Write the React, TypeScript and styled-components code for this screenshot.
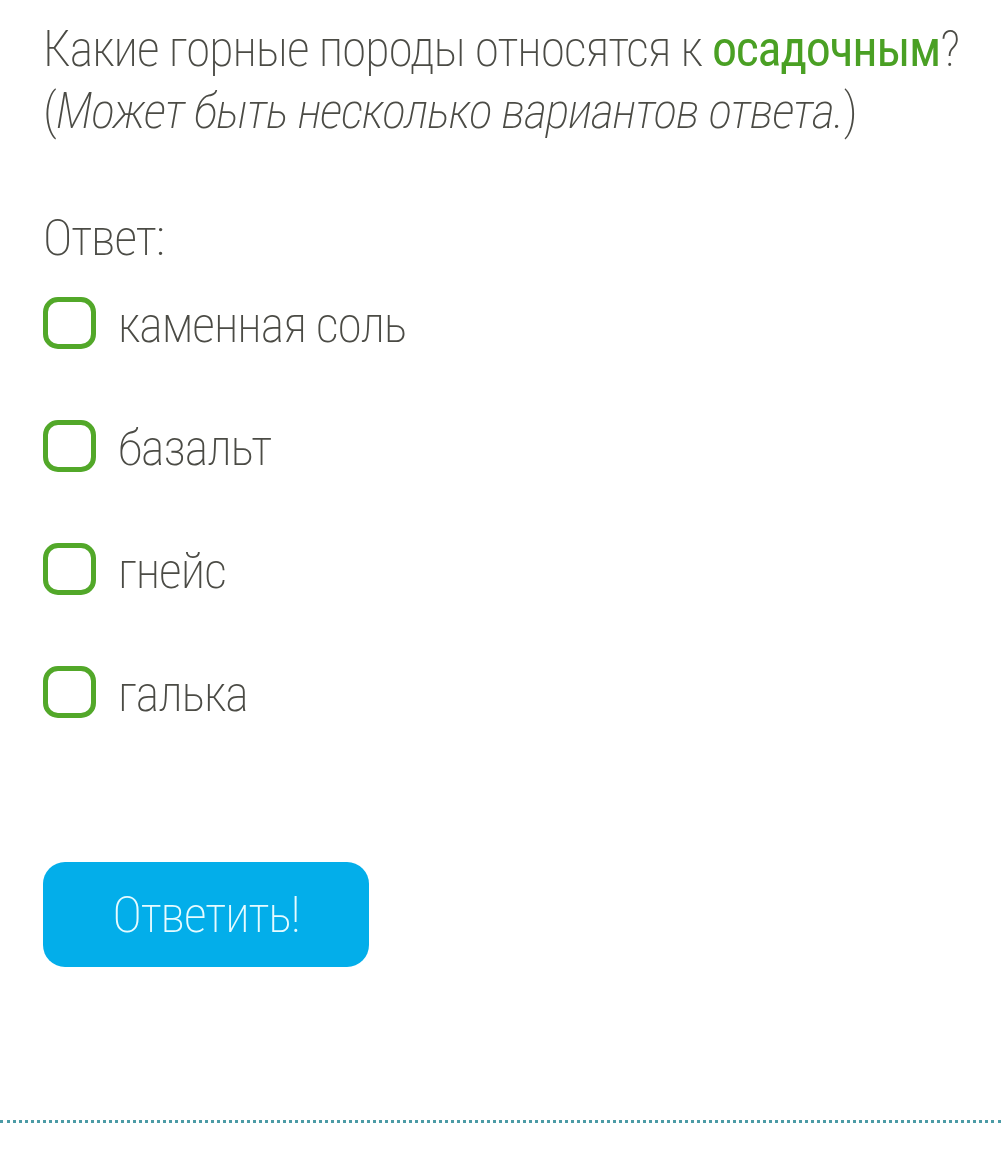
import React from "react";
import styled, { createGlobalStyle } from "styled-components";

const Global = createGlobalStyle`
  html, body { margin: 0; padding: 0; background: #ffffff; }
  body {
    font-family: "Roboto Condensed", "Roboto", "Liberation Sans", sans-serif;
    font-stretch: 75%;
    font-weight: 250;
    letter-spacing: -1.05px;
    color: #4b4b45;
  }
`;

const Page = styled.div`
  display: flex;
  flex-direction: column;
  padding: 18px 0 0 0;
`;

const Content = styled.div`
  padding: 0 0 0 43px;
  display: flex;
  flex-direction: column;
`;

const Question = styled.p`
  margin: 0;
  font-size: 50px;
  line-height: 62px;
  white-space: nowrap;
`;

const Accent = styled.b`
  color: #4aa024;
  font-weight: 430;
  letter-spacing: -1.3px;
`;

const Hint = styled.i`
  font-style: italic;
`;

const Label = styled.div`
  margin-top: 65px;
  font-size: 50px;
  line-height: 62px;
`;

const Options = styled.div`
  margin-top: 25px;
  display: flex;
  flex-direction: column;
  gap: 61px;
`;

const Option = styled.label`
  display: flex;
  align-items: center;
  gap: 22px;
  height: 62px;
  font-size: 50px;
  line-height: 62px;
  cursor: pointer;
`;

const Box = styled.span`
  box-sizing: border-box;
  width: 53px;
  height: 52px;
  border: 5px solid #52a829;
  border-radius: 15px;
  flex: none;
  margin-top: -5px;
`;

const Submit = styled.button`
  margin-top: 137px;
  width: 326px;
  height: 105px;
  border: none;
  border-radius: 22px;
  background: #03aeea;
  color: #e6fbff;
  font-family: inherit;
  font-stretch: 75%;
  font-weight: 250;
  letter-spacing: -1.05px;
  font-size: 50px;
  line-height: 62px;
  padding: 0;
  cursor: pointer;
`;

const Divider = styled.hr`
  margin: 153px 0 0 0;
  border: none;
  border-top: 3px dotted #4c9ba6;
  height: 0;
`;

const options = ["каменная соль", "базальт", "гнейс", "галька"];

export default function App() {
  return (
    <>
      <Global />
      <Page>
        <Content>
          <Question>
            Какие горные породы относятся к <Accent>осадочным</Accent>?
            <br />
            (<Hint>Может быть несколько вариантов ответа.</Hint>)
          </Question>
          <Label>Ответ:</Label>
          <Options>
            {options.map((o) => (
              <Option key={o}>
                <Box />
                {o}
              </Option>
            ))}
          </Options>
          <Submit>Ответить!</Submit>
        </Content>
        <Divider />
      </Page>
    </>
  );
}
